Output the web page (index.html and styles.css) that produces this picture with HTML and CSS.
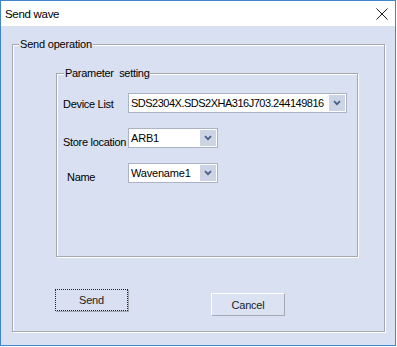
FILE: index.html
```html
<!DOCTYPE html>
<html lang="en">

<head>
  <meta charset="UTF-8">
  <title>Send wave</title>
  <link rel="stylesheet" href="styles.css">
</head>

<body>
  <div class="window">
    <div class="titlebar">
      <span class="title">Send wave</span>
      <svg class="close" width="12" height="12" viewBox="0 0 12 12">
        <path d="M0.5 0.5 L11.5 11.5 M11.5 0.5 L0.5 11.5" stroke="#1a1a1a" stroke-width="1" fill="none" />
      </svg>
    </div>

    <div class="client">
      <!-- Send operation -->
      <div class="group group-outer">
        <span class="group-title">Send operation</span>

        <div class="group group-inner">
          <span class="group-title group-title-inner">Parameter&nbsp; setting</span>

          <div class="row">
            <span class="label">Device List</span>
            <div class="combo combo-wide">
              <span class="combo-text combo-text-long">SDS2304X.SDS2XHA316J703.244149816</span>
              <span class="combo-arrow">
                <svg width="8" height="6" viewBox="0 0 8 6"><path d="M1 1.2 L4 4.2 L7 1.2" stroke="#4a5d84" stroke-width="1.7" fill="none" /></svg>
              </span>
            </div>
          </div>

          <div class="row">
            <span class="label">Store location</span>
            <div class="combo combo-small">
              <span class="combo-text">ARB1</span>
              <span class="combo-arrow">
                <svg width="8" height="6" viewBox="0 0 8 6"><path d="M1 1.2 L4 4.2 L7 1.2" stroke="#4a5d84" stroke-width="1.7" fill="none" /></svg>
              </span>
            </div>
          </div>

          <div class="row">
            <span class="label label-name">Name</span>
            <div class="combo combo-small">
              <span class="combo-text">Wavename1</span>
              <span class="combo-arrow">
                <svg width="8" height="6" viewBox="0 0 8 6"><path d="M1 1.2 L4 4.2 L7 1.2" stroke="#4a5d84" stroke-width="1.7" fill="none" /></svg>
              </span>
            </div>
          </div>
        </div>

        <div class="buttons">
          <button class="btn btn-focus">Send</button>
          <button class="btn btn-cancel">Cancel</button>
        </div>
      </div>
    </div>
  </div>
</body>

</html>
```

FILE: styles.css
```css
/* Dialog base */
body {
  margin: 0;
  padding: 0;
  background: #fff;
  font-family: 'Liberation Sans', Arial, sans-serif;
  font-size: 11px;
  color: #000;
}

.window {
  width: 396px;
  height: 346px;
  box-sizing: border-box;
  border: 1px solid #3f86cf;
  display: flex;
  flex-direction: column;
}

.titlebar {
  height: 25px;
  background: #fff;
  display: flex;
  align-items: center;
  justify-content: space-between;
  padding-left: 4px;
}

.title {
  font-size: 11.5px;
  letter-spacing: -0.3px;
  margin-top: 1px;
}

.close {
  margin-right: 7px;
  margin-top: 1px;
}

.client {
  flex: 1;
  background: #d8e0f1;
  padding: 18px 0 0 11px;
}

/* Group boxes (etched look) */
.group {
  position: relative;
  box-sizing: border-box;
  border: 1px solid #a3a8b2;
  box-shadow: 1px 1px 0 #fff, inset 1px 1px 0 #fff;
}

.group-outer {
  width: 373px;
  height: 288px;
}

.group-inner {
  width: 302px;
  height: 184px;
  margin: 28px 0 0 43px;
  padding: 19px 0 0 6px;
  display: flex;
  flex-direction: column;
  gap: 15px;
}

.group-title {
  position: absolute;
  top: -7px;
  left: 6px;
  padding: 0 1px;
  line-height: 13px;
  background: #d8e0f1;
  letter-spacing: -0.2px;
}

.group-title-inner {
  left: 7px;
  letter-spacing: -0.3px;
}

/* Rows */
.row {
  display: flex;
  align-items: center;
  height: 20px;
}

.label {
  width: 65px;
  flex-shrink: 0;
  white-space: nowrap;
  letter-spacing: -0.3px;
  margin-top: 2px;
}

.row + .row .label {
  margin-top: 7px;
}

.label-name {
  padding-left: 4px;
  box-sizing: border-box;
}

/* Combo boxes */
.combo {
  height: 20px;
  box-sizing: border-box;
  background: #fff;
  border: 1px solid #abb4c6;
  display: flex;
  align-items: stretch;
}

.combo-wide {
  width: 219px;
}

.combo-small {
  width: 90px;
}

.combo-text {
  flex: 1;
  padding-left: 2px;
  line-height: 18px;
  white-space: nowrap;
  overflow: hidden;
  letter-spacing: -0.2px;
}

.combo-text-long {
  letter-spacing: -0.5px;
}

.combo-arrow {
  width: 16px;
  margin: 1px;
  background: #ccd4e5;
  display: flex;
  align-items: center;
  justify-content: center;
}

/* Buttons */
.buttons {
  display: flex;
  align-items: flex-start;
  padding-left: 42px;
  margin-top: 32px;
}

.btn {
  font-family: 'Liberation Sans', Arial, sans-serif;
  font-size: 11px;
  letter-spacing: -0.2px;
  color: #222;
  background: #d8e0f1;
  padding: 0;
  box-sizing: border-box;
}

.btn-focus {
  width: 73px;
  height: 22px;
  border: 1px dotted #222;
  box-shadow: 1px 1px 0 #a3a8b2;
}

.btn-cancel {
  width: 74px;
  height: 23px;
  margin: 4px 0 0 83px;
  border: 1px solid;
  border-color: #fff #a3a8b2 #a3a8b2 #fff;
  background: #dbe3f3;
}
```
